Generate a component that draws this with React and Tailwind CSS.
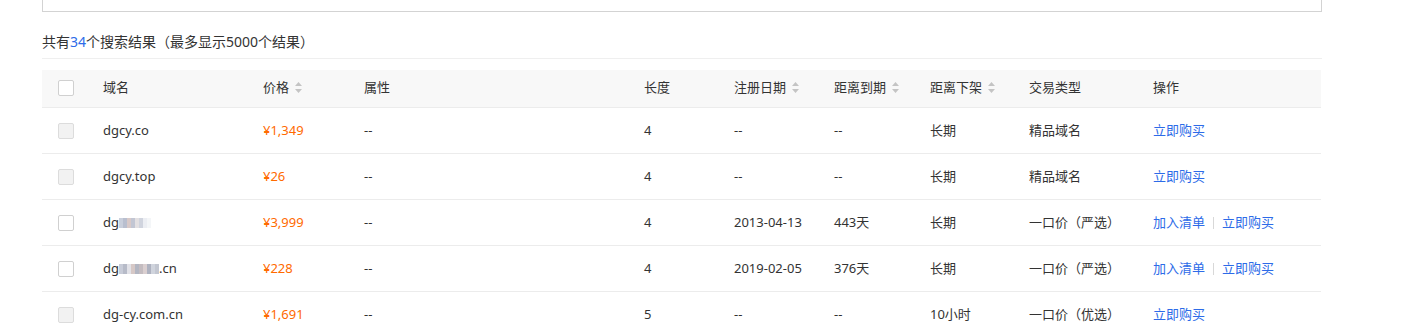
import React from "react";

const font = { fontFamily: '"Noto Sans", "Noto Sans CJK SC", sans-serif' };

function SortIcon() {
  return (
    <svg width="9" height="13" viewBox="0 0 9 13" className="ml-[5px] shrink-0">
      <path d="M4.5 1 L8 5 L1 5 Z" fill="#c4c4c4" />
      <path d="M4.5 12 L8 8 L1 8 Z" fill="#c4c4c4" />
    </svg>
  );
}

function Checkbox({ disabled }) {
  return (
    <div
      className={
        "w-[16px] h-[16px] rounded-[2px] border " +
        (disabled ? "bg-[#f2f2f2] border-[#dcdcdc]" : "bg-white border-[#d0d0d0]")
      }
    />
  );
}

function Blur({ cells }) {
  return (
    <span className="inline-flex items-center">
      {cells.map((c, i) => (
        <span key={i} className="inline-block w-[4px] h-[10px]" style={{ background: c }} />
      ))}
    </span>
  );
}

const cols = "grid grid-cols-[61px_160px_101px_280px_90px_100px_96px_99px_124px_1fr] items-center";

const rows = [
  { d: "dgcy.co", p: "¥1,349", len: "4", reg: "--", exp: "--", off: "长期", type: "精品域名", add: false, dis: true },
  { d: "dgcy.top", p: "¥26", len: "4", reg: "--", exp: "--", off: "长期", type: "精品域名", add: false, dis: true },
  { d: "b1", p: "¥3,999", len: "4", reg: "2013-04-13", exp: "443天", off: "长期", type: "一口价（严选）", add: true, dis: false },
  { d: "b2", p: "¥228", len: "4", reg: "2019-02-05", exp: "376天", off: "长期", type: "一口价（严选）", add: true, dis: false },
  { d: "dg-cy.com.cn", p: "¥1,691", len: "5", reg: "--", exp: "--", off: "10小时", type: "一口价（优选）", add: false, dis: true },
];

function Domain({ d }) {
  if (d === "b1")
    return (
      <span className="inline-flex items-center">
        dg
        <Blur cells={["#c9cfdc", "#b9bfcf", "#d8c9c8", "#c2c6d3", "#e3e0e2", "#d0d4de", "#eceef3", "#f4f6f8"]} />
      </span>
    );
  if (d === "b2")
    return (
      <span className="inline-flex items-center">
        dg
        <Blur cells={["#c8ccd8", "#b7bbc8", "#e2e2e8", "#d6c8c6", "#b3b6c2", "#c4bcc0", "#dacfd0", "#aeb2c0", "#d0d4dd", "#c3c7d1"]} />
        .cn
      </span>
    );
  return <span>{d}</span>;
}

export default function App() {
  return (
    <div className="w-[1401px] h-[327px] bg-white overflow-hidden text-[13px] text-[#333]" style={font}>
      <div className="ml-[42px] w-[1280px]">
        <div className="h-[12px] border-x border-b border-[#d3d3d3]" />
        <div className="h-[47px] border-b border-[#efefef] flex items-center leading-none pt-[22px] pb-[8px] text-[14px]">
          <span>
            共有<span className="text-[#2d6be8]">34</span>个搜索结果（最多显示5000个结果）
          </span>
        </div>
        <div className="mt-[11px] w-[1279px]">
          <div className={cols + " h-[38px] pb-[2px] bg-[#f8f8f8] border-b border-[#ececec]"}>
            <div className="pl-[16px]"><Checkbox /></div>
            <div>域名</div>
            <div className="flex items-center">价格<SortIcon /></div>
            <div>属性</div>
            <div>长度</div>
            <div className="flex items-center">注册日期<SortIcon /></div>
            <div className="flex items-center">距离到期<SortIcon /></div>
            <div className="flex items-center">距离下架<SortIcon /></div>
            <div>交易类型</div>
            <div>操作</div>
          </div>
          {rows.map((r, i) => (
            <div key={i} className={cols + " h-[46px] border-b border-[#ececec]"}>
              <div className="pl-[16px]"><Checkbox disabled={r.dis} /></div>
              <div><Domain d={r.d} /></div>
              <div className="text-[#ff6a00]">{r.p}</div>
              <div>--</div>
              <div>{r.len}</div>
              <div>{r.reg}</div>
              <div>{r.exp}</div>
              <div>{r.off}</div>
              <div>{r.type}</div>
              <div className="flex items-center text-[#2d6be8]">
                {r.add && (
                  <>
                    <span>加入清单</span>
                    <span className="mx-[8px] w-px h-[12px] bg-[#d8d8d8]" />
                  </>
                )}
                <span>立即购买</span>
              </div>
            </div>
          ))}
        </div>
      </div>
    </div>
  );
}
